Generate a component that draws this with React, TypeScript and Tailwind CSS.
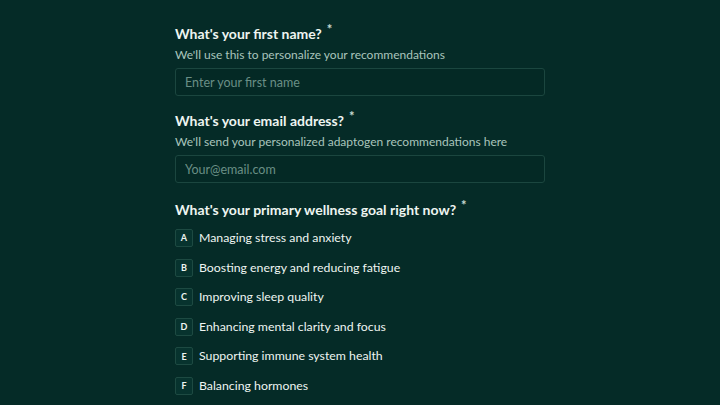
import React from 'react';

const options = [
  { key: 'A', label: 'Managing stress and anxiety' },
  { key: 'B', label: 'Boosting energy and reducing fatigue' },
  { key: 'C', label: 'Improving sleep quality' },
  { key: 'D', label: 'Enhancing mental clarity and focus' },
  { key: 'E', label: 'Supporting immune system health' },
  { key: 'F', label: 'Balancing hormones' },
];

const Label: React.FC<{ text: string }> = ({ text }) => (
  <h2 className="text-[14px] font-bold text-[#eef5f1] leading-[20px] flex items-start">
    {text}
    <span className="ml-[5px] text-[13px] leading-[12px] -mt-[1px] text-[#c9dcd5]">*</span>
  </h2>
);

export default function App() {
  return (
    <div className="w-[720px] h-[405px] overflow-hidden bg-[#052b27] font-['Lato',sans-serif]">
      <main className="w-[370px] ml-[175px] pt-[24px]">
        <section>
          <Label text="What's your first name?" />
          <p className="mt-[3px] text-[12px] leading-[16px] text-[#a9c5bc]">
            We'll use this to personalize your recommendations
          </p>
          <input
            placeholder="Enter your first name"
            className="mt-[5px] w-full h-[28px] rounded-[3px] bg-[#042925] border border-[#1b463f] px-[9px] text-[12.5px] text-[#eef5f1] placeholder:text-[#6a8f86] outline-none"
          />
        </section>

        <section className="mt-[15px]">
          <Label text="What's your email address?" />
          <p className="mt-[3px] text-[12px] leading-[16px] text-[#a9c5bc]">
            We'll send your personalized adaptogen recommendations here
          </p>
          <input
            placeholder="Your@email.com"
            className="mt-[5px] w-full h-[28px] rounded-[3px] bg-[#042925] border border-[#1b463f] px-[9px] text-[12.5px] text-[#eef5f1] placeholder:text-[#6a8f86] outline-none"
          />
        </section>

        <section className="mt-[17px]">
          <Label text="What's your primary wellness goal right now?" />
          <ul className="mt-[9px] flex flex-col gap-[11.6px]">
            {options.map((o) => (
              <li key={o.key} className="flex items-center gap-[6px]">
                <span className="w-[18px] h-[18px] rounded-[2px] border border-[#1d4a42] bg-[#07332e] flex items-center justify-center text-[9px] font-bold text-[#eef5f1]">
                  {o.key}
                </span>
                <span className="text-[12.3px] leading-[18px] text-[#eef5f1]">{o.label}</span>
              </li>
            ))}
          </ul>
        </section>
      </main>
    </div>
  );
}
